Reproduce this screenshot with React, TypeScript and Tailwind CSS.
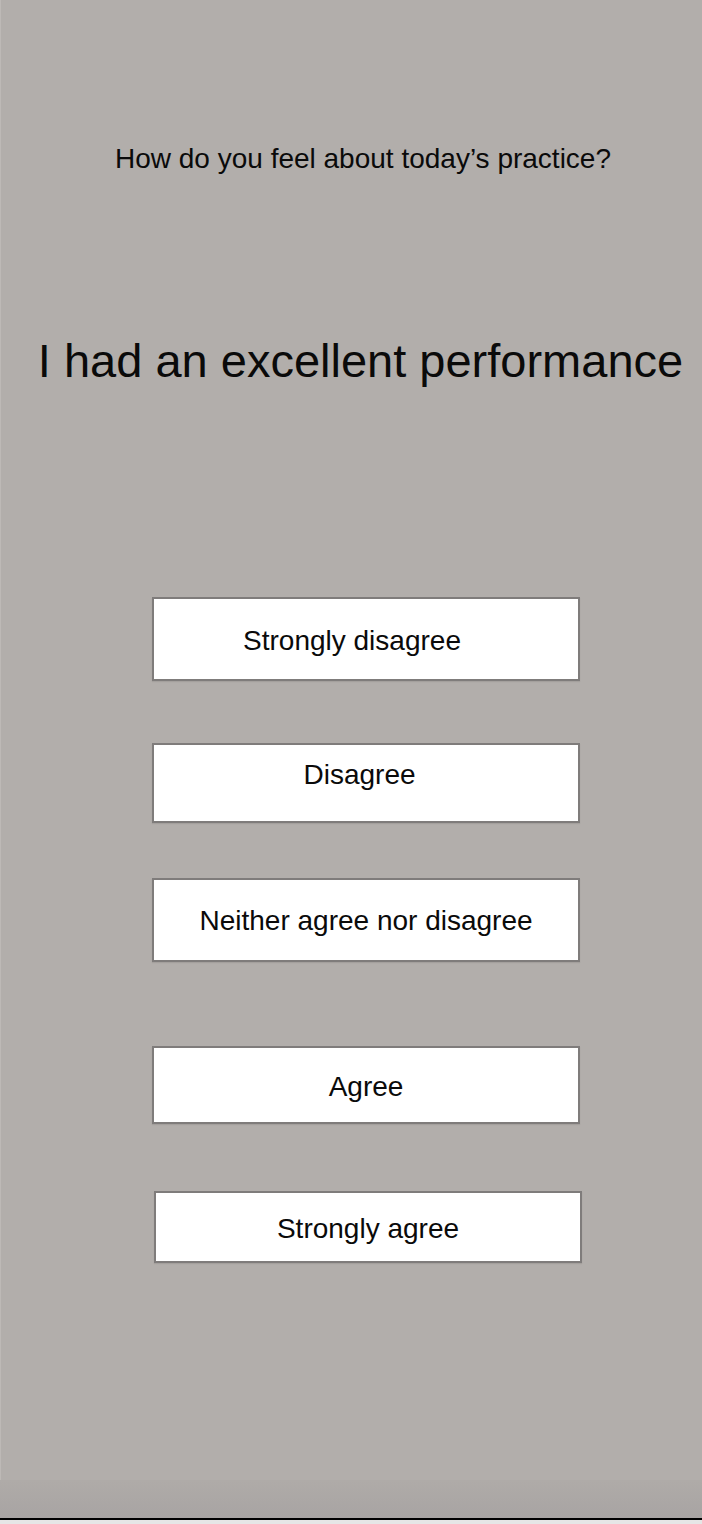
import React from "react";

const OPTIONS = [
  { label: "Strongly disagree", box: "ml-[152px] h-[84px] pr-[28px] pt-[3px]", gap: "mt-0" },
  { label: "Disagree", box: "ml-[152px] h-[80px] pr-[13px] pb-[16px]", gap: "mt-[62px]" },
  { label: "Neither agree nor disagree", box: "ml-[152px] h-[84px] pt-[2px]", gap: "mt-[55px]" },
  { label: "Agree", box: "ml-[152px] h-[78px] pt-[4px]", gap: "mt-[84px]" },
  { label: "Strongly agree", box: "ml-[154px] h-[72px] pt-[4px]", gap: "mt-[67px]" },
];

const App = () => {
  return (
    <div
      className="w-[702px] h-[1524px] overflow-hidden flex flex-col bg-white text-[#0a0a0a]"
      style={{ fontFamily: '"Liberation Sans", Arial, sans-serif' }}
    >
      <div className="h-[1518px] shrink-0 flex flex-col bg-[#b2aeab] shadow-[inset_1px_0_0_#bdb9b6]">
        {/* question header */}
        <div className="pt-[143px] pl-[24px] text-center">
          <span className="text-[28px] leading-[32px]">
            How do you feel about today’s practice?
          </span>
        </div>

        <div className="mt-[159px] pl-[19px] text-center">
          <span className="text-[47px] leading-[54px] whitespace-nowrap">
            I had an excellent performance
          </span>
        </div>

        {/* answers */}
        <div className="mt-[209px] flex flex-col items-start">
          {OPTIONS.map((option, index) => (
            <div key={index} className={option.gap}>
              <button
                className={`w-[428px] flex items-center justify-center bg-white border-2 border-[#7f7c7b] shadow-[0_1px_1px_rgba(0,0,0,0.08)] text-[28px] leading-[32px] ${option.box}`}
              >
                {option.label}
              </button>
            </div>
          ))}
        </div>

        <div className="flex-1" />
        <div className="h-[38px] bg-gradient-to-b from-[#afaba8] to-[#a8a4a3]" />
      </div>
      <div className="h-[2px] shrink-0 bg-black" />
      <div className="flex-1 bg-[#e6e6e6]" />
    </div>
  );
};

export default App;
